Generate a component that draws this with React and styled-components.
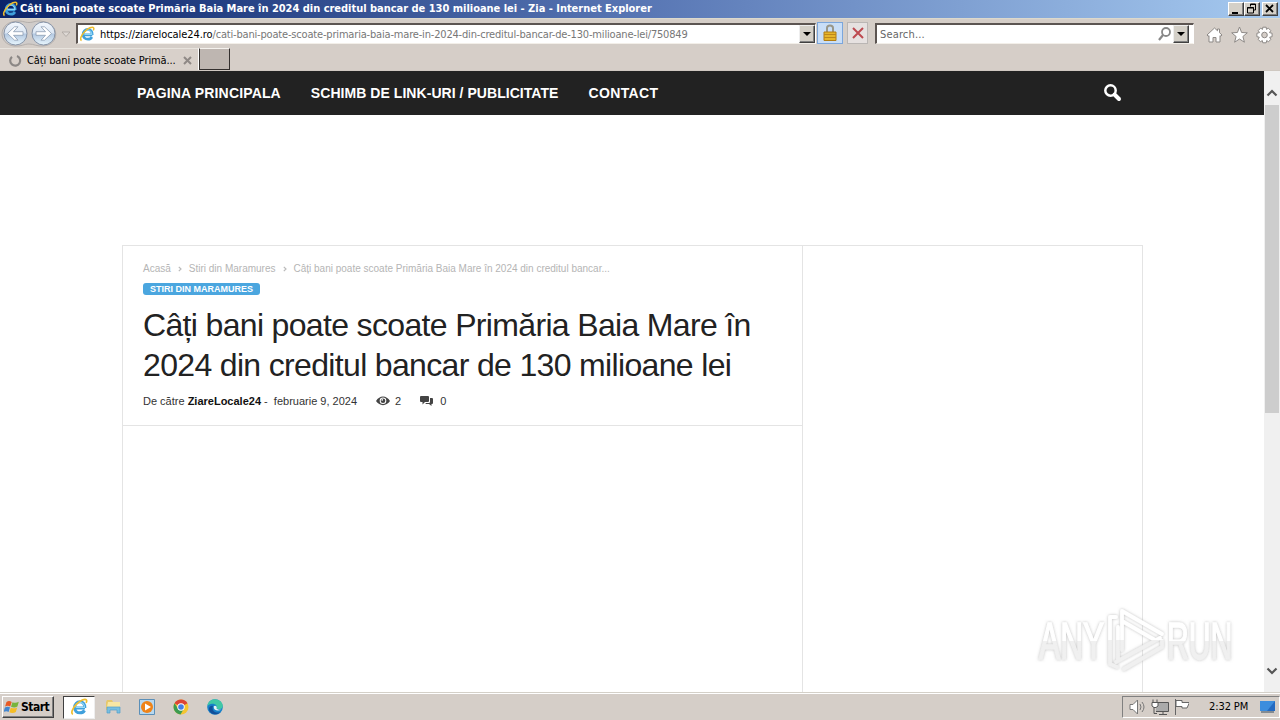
import React from 'react';
import styled, { createGlobalStyle } from 'styled-components';

const GlobalStyle = createGlobalStyle`
* { box-sizing: border-box; }
body {
  margin: 0;
  overflow: hidden;
  background: #fff;
}
`;

const Desktop = styled.div`
width: 1280px;
height: 720px;
display: flex;
flex-direction: column;
position: relative;
overflow: hidden;
background: #d4cec7;
font: 11px/14px 'DejaVu Sans Condensed', 'DejaVu Sans', sans-serif;
font-stretch: condensed;
color: #000;
svg { display: block; flex: none; }
`;

const Spaced = styled.span`
white-space: pre;
letter-spacing: ${p => p.$gap || 0}px;
color: ${p => p.$color || 'inherit'};
`;

/* ---------- title bar ---------- */

const TitleBar = styled.div`
height: 18px;
flex: none;
display: flex;
align-items: center;
padding: 0 2px 0 2px;
background: linear-gradient(90deg, #0a246a, #5876b4 50%, #a6caf0);
color: #fff;
font-weight: bold;
`;
const TitleText = styled.div`
flex: 1;
margin-left: 2px;
`;
const WindowButtons = styled.div`
display: flex;
`;
const WindowButton = styled.div`
width: 16px;
height: 14px;
margin-left: ${p => p.$gap || 0}px;
background: #d4d0c8;
border: 1px solid;
border-color: #fff #404040 #404040 #fff;
box-shadow: inset -1px -1px #808080;
`;

/* ---------- address row ---------- */

const AddressRow = styled.div`
height: 30px;
flex: none;
display: flex;
align-items: flex-start;
padding-top: 4px;
background: #d5cec8;
border-top: 1px solid #dcd9cc;
`;
const NavButtons = styled.div`
width: 76px;
margin-top: -4px;
`;
const Field = styled.div`
display: flex;
align-items: center;
width: ${p => p.$width}px;
height: 21px;
background: #fff;
border: 1px solid;
border-color: #5c5552 #fff #f3efe9 #5c5552;
border-top-width: 2px;
border-left-width: 2px;
padding-left: ${p => p.$pad}px;
margin-left: ${p => p.$left || 0}px;
`;
const FieldText = styled.div`
flex: 1;
margin-left: ${p => p.$left || 0}px;
padding-top: 1px;
`;
const DropButton = styled.div`
width: 16px;
height: 18px;
background: #d4d0c8;
border: 1px solid;
border-color: #eee #404040 #404040 #eee;
box-shadow: inset -1px -1px #808080;
display: flex;
align-items: center;
justify-content: center;
margin-right: ${p => p.$right || 0}px;
&::after {
  content: '';
  border: 4px solid transparent;
  border-top-color: #000;
  border-bottom: 0;
}
`;
const ToolButton = styled.div`
width: ${p => p.$width}px;
height: 22px;
margin: -1px 0 0 ${p => p.$left}px;
display: flex;
align-items: center;
justify-content: center;
background: ${p => (p.$active ? '#c9def7' : '#e6e1e0')};
border: 1px solid ${p => (p.$active ? '#7ba6dc' : '#bab6b4')};
`;
const Tools = styled.div`
display: flex;
gap: 8px;
margin: 3px 0 0 12px;
`;

/* ---------- tabs ---------- */

const TabRow = styled.div`
height: 23px;
flex: none;
display: flex;
background: #d6cec8;
border-bottom: 1px solid #cfc8c1;
`;
const Tab = styled.div`
width: 199px;
display: flex;
align-items: center;
padding: 2px 0 0 8px;
border-top: 1px solid #e8e4de;
border-right: 1px solid #fff;
background: #d8d0ca;
`;
const TabText = styled.div`
flex: 1;
margin-left: 5px;
`;
const NewTab = styled.div`
width: 31px;
height: 22px;
background: #beb6b1;
border: 1px solid #332f2e;
border-top-color: #f5f2ee;
`;

/* ---------- web page ---------- */

const Viewport = styled.div`
height: 621px;
flex: none;
display: flex;
background: #fff;
font-family: 'Liberation Sans', Arial, sans-serif;
font-stretch: normal;
`;
const Page = styled.div`
width: 1264px;
display: flex;
flex-direction: column;
`;
const Menu = styled.nav`
height: 44px;
flex: none;
display: flex;
align-items: center;
padding: 0 142px 0 137px;
gap: 30px;
background: #222;
color: #fff;
font-size: 14px;
font-weight: bold;
svg { margin: -2px 0 0 auto; }
`;
const Content = styled.main`
width: 1021px;
flex: 1;
margin: 130px 0 0 122px;
display: flex;
border: 1px solid #e4e4e4;
border-bottom: 0;
`;
const Article = styled.article`
width: 680px;
border-right: 1px solid #e4e4e4;
`;
const ArticleHead = styled.header`
height: 180px;
padding: 16px 19px 0 20px;
border-bottom: 1px solid #e4e4e4;
`;
const Breadcrumbs = styled.div`
display: flex;
align-items: center;
height: 14px;
font-size: 10px;
color: #b5b5b5;
svg { margin: 0 7px; }
`;
const Category = styled.div`
width: 117px;
height: 12px;
margin-top: 7px;
padding-left: 7px;
border-radius: 3px;
background: #4ba6df;
color: #fff;
font-size: 9px;
line-height: 12px;
font-weight: bold;
`;
const Headline = styled.h1`
margin: 10px 0 0;
font-size: 32px;
line-height: 40px;
font-weight: normal;
color: #222;
`;
const Meta = styled.div`
display: flex;
align-items: center;
height: 14px;
margin-top: 9px;
font-size: 11px;
color: #333;
b { color: #111; }
`;
const Count = styled.span`
display: flex;
align-items: center;
gap: ${p => p.$gap}px;
margin-left: ${p => p.$left}px;
`;
const ScrollBar = styled.div`
width: 16px;
display: flex;
flex-direction: column;
align-items: center;
justify-content: space-between;
background: #f0f0f0;
padding: 18px 0 17px;
`;
const Thumb = styled.div`
width: 14px;
height: 308px;
margin: 8px 0 auto;
background: #cdcdcd;
`;
const Watermark = styled.svg`
position: absolute;
left: 1026px;
top: 600px;
`;

/* ---------- taskbar ---------- */

const TaskBar = styled.div`
height: 28px;
flex: none;
display: flex;
align-items: center;
padding: 1px 0 0 2px;
background: #d5cec8;
border-top: 1px solid #d4d0c8;
box-shadow: inset 0 1px #fff;
`;
const StartButton = styled.div`
width: 52px;
height: 22px;
display: flex;
align-items: center;
padding-left: 1px;
gap: 1px;
font-size: 12px;
font-weight: bold;
border: 1px solid;
border-color: #fff #404040 #404040 #fff;
box-shadow: inset -1px -1px #808080;
`;
const ActiveTask = styled.div`
width: 32px;
height: 23px;
margin-left: 9px;
display: flex;
align-items: center;
justify-content: center;
background: #fff;
border: 1px solid;
border-color: #404040 #eee #eee #404040;
`;
const Launchers = styled.div`
display: flex;
flex: 1;
gap: 18px;
margin-left: 10px;
`;
const Tray = styled.div`
width: 158px;
height: 22px;
display: flex;
align-items: center;
padding-left: 6px;
border: 1px solid;
border-color: #808080 #fff #fff #808080;
`;
const Clock = styled.div`
width: 51px;
margin: 0 0 0 20px;
`;

const IeIcon = ({ size = 16 }) => (
  <svg width={size} height={size} viewBox="0 0 16 16" fill="none">
    <path d="M13.3 8.9H5.1M13.2 8.8C13.4 5.5 11.5 3.4 8.9 3.4C6.1 3.4 4.1 5.6 4.1 8.4C4.1 11.2 6 13.2 8.9 13.2C10.8 13.2 12.1 12.4 12.9 11" stroke="#3fa0dc" strokeWidth="2.7" />
    <path d="M13.3 8.4H5.4M12.8 8C12.8 5.6 11 4 8.9 4C6.5 4 4.8 5.8 4.8 8.2" stroke="#9bdcf8" strokeWidth="1" />
    <path d="M2.6 14.5C.6 13.6 2 9.4 5.4 5.9C9 2.1 13.5.1 14.6 1.8C15 2.4 14.8 3.4 14.3 4.4" stroke="#efbd2d" strokeWidth="1.5" />
  </svg>
);

const BackForward = () => (
  <svg width="76" height="30" viewBox="0 0 76 30">
    <defs>
      <linearGradient id="orb" x1="0" y1="0" x2="0" y2="1">
        <stop offset="0" stopColor="#f4f8fd" />
        <stop offset=".48" stopColor="#dbe6f3" />
        <stop offset=".52" stopColor="#b3c8e1" />
        <stop offset="1" stopColor="#e8f6fd" />
      </linearGradient>
    </defs>
    <path d="M14 2.500C22 1 24 3.500 29 3.500S36 1 43 2.500C60 5 60 26 43 27C37 27.500 34 25 29 25S22 27.500 14 27C-2 25-2 5 14 2.500Z" fill="#d0ccca" stroke="#b3aeab" />
    <circle cx="15.500" cy="14.500" r="11.500" fill="url(#orb)" stroke="#8693a7" />
    <circle cx="43.500" cy="14.500" r="11.500" fill="url(#orb)" stroke="#8693a7" />
    <g fill="#fff" stroke="#8d9db2" strokeWidth=".8">
      <path d="M7.500 14.500L14.500 7.800H18L13.500 12.700H23V16.300H13.500L18 21.200H14.500Z" />
      <path d="M51.500 14.500L44.500 7.800H41L45.500 12.700H36V16.300H45.500L41 21.200H44.500Z" />
    </g>
    <path d="M62 13H70L66 17.500Z" fill="#ded9d5" stroke="#aaa39e" strokeWidth=".8" />
  </svg>
);

const Crumb = () => (
  <svg width="4" height="6" viewBox="0 0 4 6"><path d="M.8.8L3 3L.8 5.200" fill="none" stroke="#bbb" strokeWidth="1.200" /></svg>
);

const Chevron = ({ down }) => (
  <svg width="12" height="8" viewBox="0 0 12 8">
    <path d={down ? 'M1.500 1.500L6 6L10.500 1.500' : 'M1.500 6.500L6 2L10.500 6.500'} fill="none" stroke="#555" strokeWidth="2.200" />
  </svg>
);

const BrowserTools = () => (
  <Tools>
    <svg width="17" height="18" viewBox="0 0 17 18" fill="#fff" stroke="#8d8986">
      <path d="M1 9L8.500 2L11.500 4.800V3H13.500V6.700L16 9L14.800 10.300L14 9.600V16H10V11.500H7V16H3V9.600L2.200 10.300Z" />
    </svg>
    <svg width="17" height="18" viewBox="0 0 17 18" fill="#fff" stroke="#8d8986">
      <path d="M8.500 1L10.600 6.500L16.300 6.800L11.900 10.500L13.400 16.200L8.500 13L3.600 16.200L5.100 10.500L.7 6.800L6.400 6.500Z" />
    </svg>
    <svg width="17" height="18" viewBox="-8.500 -9 17 18" fill="#fff" stroke="#8d8986">
      <path fillRule="evenodd" d="M-1.700-7.800H1.700L2-5.600L3.800-6.900L6.300-4.400L5-2.400L7.600-1.700V1.700L5.200 2.200L6.300 4.400L4 6.800L2.200 5.500L1.700 7.800H-1.700L-2.200 5.500L-4 6.800L-6.300 4.400L-5.200 2.200L-7.600 1.700V-1.700L-5-2.400L-6.300-4.400L-3.800-6.900L-2-5.600ZM0-2.800A2.800 2.800 0 1 0 0 2.800A2.800 2.800 0 1 0 0-2.800Z" />
    </svg>
  </Tools>
);

const Logo = () => (
  <Watermark width="214" height="80" viewBox="1026 600 214 80">
    <defs>
      <filter id="glow" x="-10%" y="-20%" width="120%" height="140%">
        <feDropShadow dx="0" dy="0" stdDeviation="1.500" floodColor="#888" floodOpacity=".55" />
      </filter>
      <linearGradient id="fade" x1="0" y1="609" x2="0" y2="671" gradientUnits="userSpaceOnUse">
        <stop offset=".5" stopColor="#fff" />
        <stop offset=".5" stopColor="#f0f0f0" />
      </linearGradient>
      <linearGradient id="textFade" x1="0" y1="-37" x2="0" y2="0" gradientUnits="userSpaceOnUse">
        <stop offset=".5" stopColor="#fff" />
        <stop offset=".5" stopColor="#f0f0f0" />
      </linearGradient>
    </defs>
    <g filter="url(#glow)">
      <g fontFamily="'Liberation Sans', sans-serif" fontSize="52" fill="url(#textFade)" stroke="url(#textFade)" strokeWidth="1.500">
        <text transform="translate(1039 659) scale(.61 1)">ANY</text>
        <text transform="translate(1167 659) scale(.58 1)">RUN</text>
      </g>
      <g fill="none" stroke="url(#fade)" strokeWidth="3.800" strokeLinejoin="round" strokeLinecap="round">
        <path d="M1122 650V611L1162 634M1122 621L1155 640" />
        <path d="M1116 617H1110V664L1117 667M1118 661V627M1116 662L1160 638M1124 669L1162 647V641" />
      </g>
    </g>
  </Watermark>
);

const StartFlag = () => (
  <svg width="16" height="16" viewBox="0 0 16 16">
    <path d="M2.500 3C4.500 1.500 6 2 7.700 2.900L6.200 7.500C4.500 6.500 3 6.500 1.100 7.600Z" fill="#e85a24" />
    <path d="M8.500 3.200C10.500 4.200 12.500 4.100 14.800 2.800L13.400 7.500C11.500 8.700 9.500 8.800 7 7.800Z" fill="#78b43c" />
    <path d="M.9 8.500C3 7.300 4.500 7.500 6 8.300L4.600 12.900C3 12 1.500 12-.5 13Z" fill="#4386cf" />
    <path d="M6.800 8.700C9 9.600 11 9.500 13.200 8.400L11.800 13C10 14.200 7.500 14.300 5.400 13.300Z" fill="#f5bd25" />
  </svg>
);

const Apps = () => (
  <Launchers>
    <svg width="16" height="16" viewBox="0 0 16 16">
      <path d="M1 3L2 1H7L8 3H14V11H1Z" fill="#e6c86b" />
      <path d="M3 3H15V8H2Z" fill="#f8e7a3" />
      <path d="M2 8H15V14H12V11H5V14H2Z" fill="#78bfe0" stroke="#529fca" strokeWidth=".7" />
    </svg>
    <svg width="16" height="16" viewBox="0 0 16 16">
      <path d="M.5.500H15.500V15.500H.5Z" fill="#b8d8ef" stroke="#5b8fb8" />
      <circle cx="8" cy="8" r="6" fill="#ef8318" />
      <path d="M6 4.500V11.500L12 8Z" fill="#fff" />
    </svg>
    <svg width="16" height="16" viewBox="0 0 16 16">
      <circle cx="8" cy="8" r="7.500" fill="#f4c531" />
      <path d="M8 8L1.500 4.300A7.500 7.500 0 0 1 14.500 4.300Z" fill="#dc4437" />
      <path d="M1.500 4.300A7.500 7.500 0 0 0 7.500 15.500L11 9.500L5 9.500Z" fill="#3c9b51" />
      <circle cx="8" cy="8" r="3.700" fill="#fff" />
      <circle cx="8" cy="8" r="2.800" fill="#437fe6" />
    </svg>
    <svg width="16" height="16" viewBox="0 0 16 16">
      <circle cx="8" cy="8" r="7.800" fill="#1680c9" />
      <path d="M.4 7C1 2.500 4 .2 8 .2C13 .2 16 4 15.800 7.300C15.500 10 12 11 9.500 9.500C11 7 8 4.500 5 4.800C3 5 1.500 5.800.4 7Z" fill="#41c8a5" />
      <path d="M6 7C4.500 10.500 7 15 13.500 13.200C9 17.500 1.500 14.500 2 9.500C2.400 7.500 4 6.500 6 7Z" fill="#124f9a" />
      <path d="M6.700 7.500C6.300 11 10 12.500 14.500 10.800C12.500 11 10.200 10.500 9.500 9.500C10.300 8.500 9.500 7 8 6.800C7.500 6.900 7 7 6.700 7.500Z" fill="#e6f3f6" />
    </svg>
  </Launchers>
);

const App = () => (
  <Desktop>
    <GlobalStyle />
    <TitleBar>
      <IeIcon />
      <TitleText><Spaced $gap={-0.02}>Câți bani poate scoate Primăria Baia Mare în 2024 din creditul bancar de 130 milioane lei - Zia - Internet Explorer</Spaced></TitleText>
      <WindowButtons>
        <WindowButton><svg width="14" height="12"><path d="M3 9H9V11H3Z" /></svg></WindowButton>
        <WindowButton><svg width="14" height="12"><path d="M5.500 3.500V1H10.500V7H8.500M5 1.500H11M2.500 4.500H8.500V10H2.500ZM2 5H9" fill="none" stroke="#000" /></svg></WindowButton>
        <WindowButton $gap={2}><svg width="14" height="12"><path d="M3 2L10 9M10 2L3 9" stroke="#000" strokeWidth="1.800" /></svg></WindowButton>
      </WindowButtons>
    </TitleBar>

    <AddressRow>
      <NavButtons><BackForward /></NavButtons>
      <Field $width={740} $pad={1}>
        <IeIcon />
        <FieldText $left={5}>
          <Spaced $gap={-0.07}>https://ziarelocale24.ro</Spaced>
          <Spaced $gap={-0.18} $color="#777">/cati-bani-poate-scoate-primaria-baia-mare-in-2024-din-creditul-bancar-de-130-milioane-lei/750849</Spaced>
        </FieldText>
        <DropButton />
      </Field>
      <ToolButton $active $width={26} $left={1}>
        <svg width="14" height="18" viewBox="0 0 14 18">
          <path d="M4 9V4C4 .5 10 .5 10 4V9" fill="none" stroke="#99978a" strokeWidth="2" />
          <path d="M1 8H13V16.500H1Z" fill="#e6b52a" stroke="#b17c12" />
          <path d="M1 10.500H13M1 13.500H13" stroke="#bd871a" />
        </svg>
      </ToolButton>
      <ToolButton $width={21} $left={4}>
        <svg width="12" height="12"><path d="M1 1L11 11M11 1L1 11" stroke="#bd4a50" strokeWidth="2" /></svg>
      </ToolButton>
      <Field $width={319} $pad={3} $left={7}>
        <FieldText><Spaced $color="#666" $gap={0.15}>Search...</Spaced></FieldText>
        <svg width="16" height="16"><circle cx="9" cy="6" r="4" fill="none" stroke="#888" strokeWidth="1.800" /><path d="M6 9L2 14" stroke="#888" strokeWidth="2.200" /></svg>
        <DropButton $right={4} />
      </Field>
      <BrowserTools />
    </AddressRow>

    <TabRow>
      <Tab>
        <svg width="14" height="14"><path d="M9 2A5 5 0 1 1 4 2.800" fill="none" stroke="#8b8785" strokeWidth="2.200" /></svg>
        <TabText><Spaced $gap={-0.12}>Câți bani poate scoate Primă...</Spaced></TabText>
        <svg width="16" height="10"><path d="M2 1L9 8M9 1L2 8" stroke="#8f8986" strokeWidth="2" /></svg>
      </Tab>
      <NewTab />
    </TabRow>

    <Viewport>
      <Page>
        <Menu>
          <Spaced $gap={0.15}>PAGINA PRINCIPALA</Spaced>
          <Spaced $gap={0.05}>SCHIMB DE LINK-URI / PUBLICITATE</Spaced>
          <Spaced $gap={0.35}>CONTACT</Spaced>
          <svg width="19" height="19" viewBox="0 0 19 19">
            <circle cx="7.500" cy="7.500" r="5.200" fill="none" stroke="#fff" strokeWidth="2.500" />
            <path d="M11.500 11.500L16 16" stroke="#fff" strokeWidth="4" strokeLinecap="round" />
          </svg>
        </Menu>
        <Content>
          <Article>
            <ArticleHead>
              <Breadcrumbs>
                <Spaced>Acasă</Spaced><Crumb />
                <Spaced>Stiri din Maramures</Spaced><Crumb />
                <Spaced>Câți bani poate scoate Primăria Baia Mare în 2024 din creditul bancar...</Spaced>
              </Breadcrumbs>
              <Category><Spaced>STIRI DIN MARAMURES</Spaced></Category>
              <Headline>
                <Spaced $gap={-0.66}>Câți bani poate scoate Primăria Baia Mare în</Spaced><br />
                <Spaced $gap={-0.66}>2024 din creditul bancar de 130 milioane lei</Spaced>
              </Headline>
              <Meta>
                <Spaced>De către <b>ZiareLocale24</b> -  februarie 9, 2024</Spaced>
                <Count $left={19} $gap={5}>
                  <svg width="14" height="10" viewBox="0 0 14 10">
                    <path d="M0 5C3.500-1 10.500-1 14 5C10.500 10.500 3.500 10.500 0 5Z" fill="#444" />
                    <circle cx="7" cy="4.700" r="3.300" fill="#fff" /><circle cx="7" cy="4.700" r="2.300" fill="#444" />
                    <circle cx="6.200" cy="3.900" r=".8" fill="#fff" />
                  </svg>
                  2
                </Count>
                <Count $left={19} $gap={7}>
                  <svg width="13" height="10" viewBox="0 0 13 10" fill="#444">
                    <path d="M1 0H8Q9 0 9 1V5Q9 6 8 6H5L2.500 8.500V6H1Q0 6 0 5V1Q0 0 1 0Z" />
                    <path d="M10 2H12Q13 2 13 3V7Q13 8 12 8H11.500V10L9 8H6Q5.500 8 5.500 7H9Q10 7 10 6Z" />
                  </svg>
                  0
                </Count>
              </Meta>
            </ArticleHead>
          </Article>
        </Content>
      </Page>
      <ScrollBar><Chevron /><Thumb /><Chevron down /></ScrollBar>
    </Viewport>

    <TaskBar>
      <StartButton><StartFlag /><Spaced $gap={-0.5}>Start</Spaced></StartButton>
      <ActiveTask><IeIcon size={18} /></ActiveTask>
      <Apps />
      <Tray>
        <svg width="18" height="16" viewBox="0 0 18 16" fill="#fff" stroke="#777">
          <path d="M1 5.500H4L8.500 1V15L4 10.500H1Z" /><path d="M11 5Q13 8 11 11M13 3Q17 8 13 13" fill="none" />
        </svg>
        <svg width="24" height="18" viewBox="0 0 24 18" fill="none" stroke="#555">
          <path d="M9 4.500H21.500V13.500H9" fill="#aaa" /><path d="M12 16.500H20M16 14V16M7 9V15.500H10" />
          <path d="M6 1.500V4M10 1.500V4M5 4.500H11V8L9 9.500H7L5 8Z" fill="#fff" />
        </svg>
        <svg width="18" height="18" viewBox="-2 0 18 18" fill="#fff" stroke="#666">
          <path d="M2.500 1V17" /><path d="M3 2.500H9V4.500H16.500L14 10H9V8.500H3Z" />
        </svg>
        <Clock><Spaced $gap={-0.1}>2:32 PM</Spaced></Clock>
        <svg width="16" height="14"><path d="M0 1H15V11H0Z" fill="#246ac1" /><path d="M0 1H15L7 11H0Z" fill="#3c8ddd" /><path d="M1 12H14" stroke="#33485d" /></svg>
      </Tray>
    </TaskBar>
    <Logo />
  </Desktop>
);

export default App;
